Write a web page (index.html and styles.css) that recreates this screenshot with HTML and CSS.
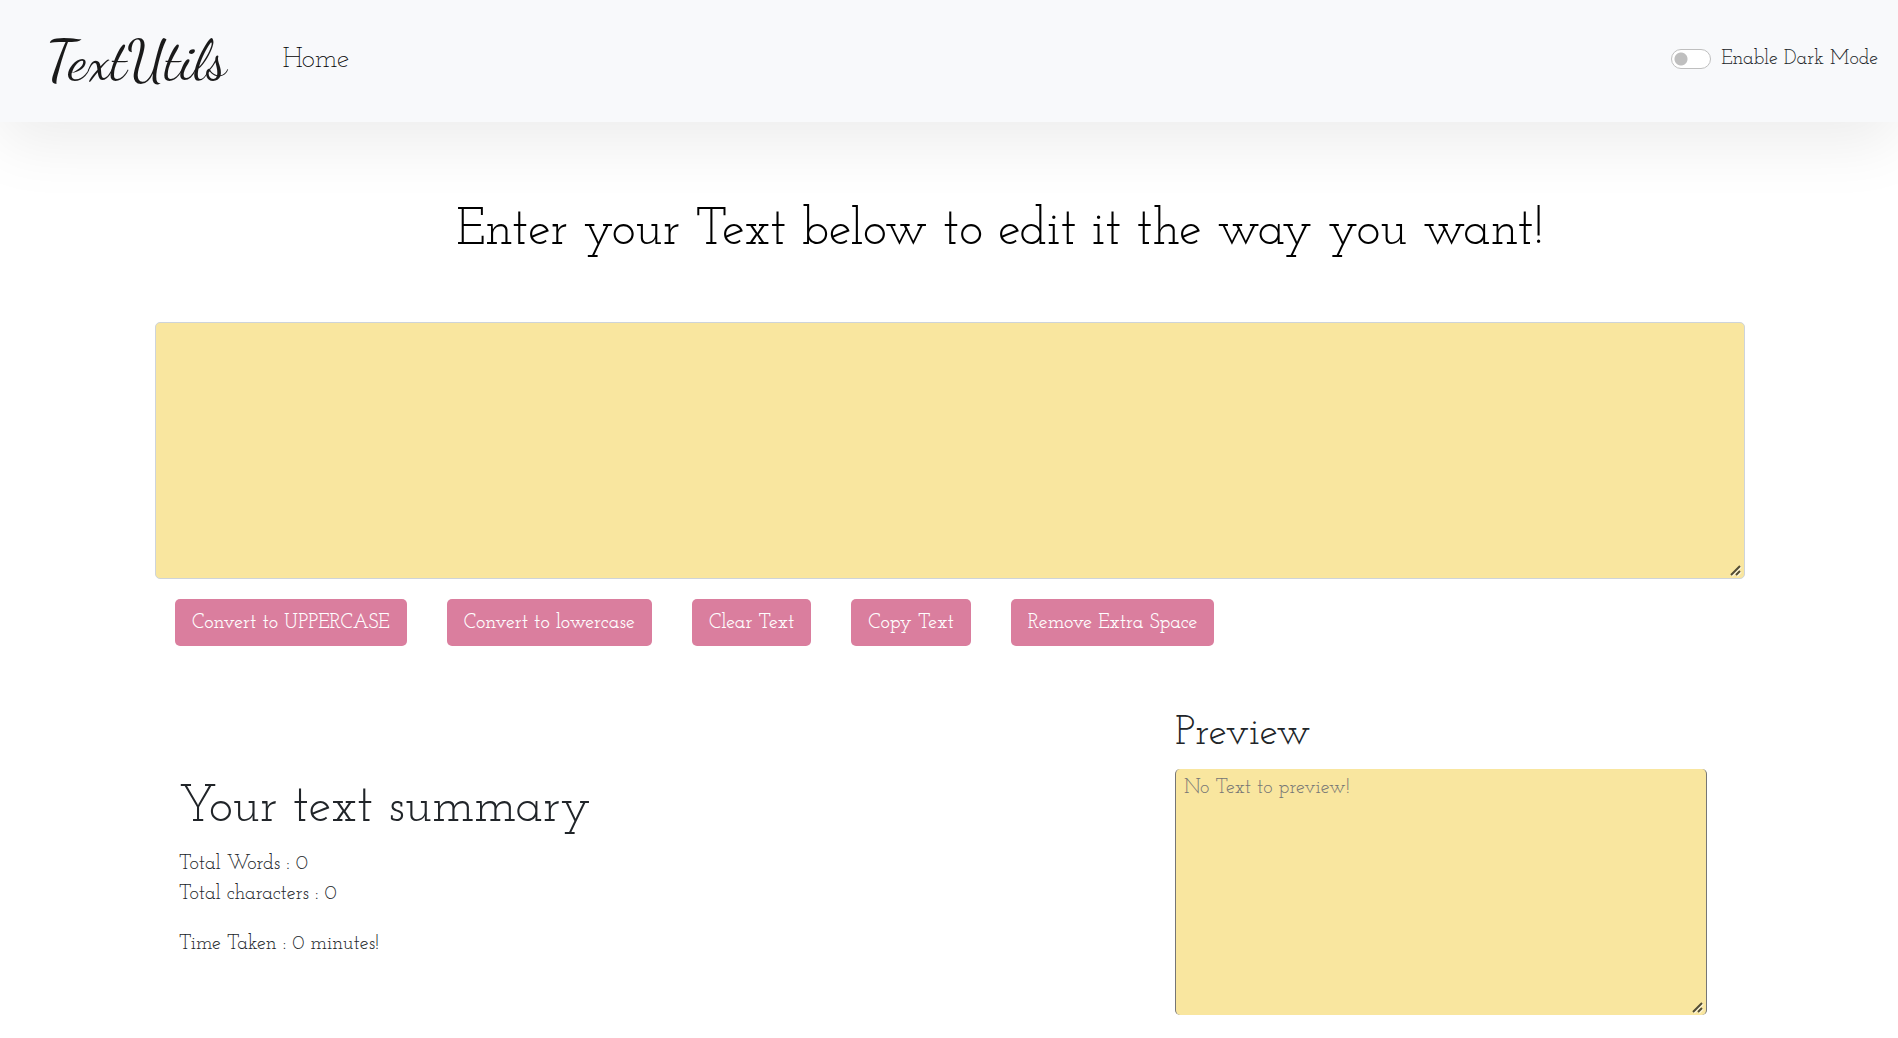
FILE: index.html
```html
<!DOCTYPE html>
<html lang="en">
<head>
  <meta charset="utf-8">
  <meta name="viewport" content="width=device-width, initial-scale=1">
  <title>TextUtils</title>
  <link rel="stylesheet" href="styles.css">
</head>
<body>
  <nav class="navbar">
    <a class="brand" href="#">TextUtils</a>
    <a class="nav-link" href="#">Home</a>
    <div class="mode">
      <input class="switch" type="checkbox" role="switch" id="dark-mode">
      <label for="dark-mode">Enable Dark Mode</label>
    </div>
  </nav>
  <main class="container">
    <h1 class="title"><label for="text">Enter your Text below to edit it the way you want!</label></h1>
    <textarea class="editor" id="text"></textarea>
    <div class="actions">
      <button class="btn" type="button">Convert to UPPERCASE</button>
      <button class="btn" type="button">Convert to lowercase</button>
      <button class="btn" type="button">Clear Text</button>
      <button class="btn" type="button">Copy Text</button>
      <button class="btn" type="button">Remove Extra Space</button>
    </div>
    <div class="results">
      <section class="summary">
        <h2 class="summary-title">Your text summary</h2>
        <p class="stats">Total Words : 0<br>Total characters : 0</p>
        <p class="stats">Time Taken : 0 minutes!</p>
      </section>
      <section class="preview">
        <h2 class="preview-title"><label for="preview">Preview</label></h2>
        <textarea class="preview-box" id="preview" placeholder="No Text to preview!"></textarea>
      </section>
    </div>
  </main>
</body>
</html>
```
FILE: styles.css
```css
* {
  box-sizing: border-box;
}

body {
  margin: 0;
  background: #fff;
  color: #212529;
  font: 400 20px/30px "Josefin Slab", "Liberation Serif", serif;
}

h1, h2, p {
  margin: 0;
}

h1, h2 {
  font-weight: 400;
}

.navbar {
  display: flex;
  align-items: center;
  min-height: 122px;
  padding: 0 20px 4px 46px;
  background: #f8f9fb;
  box-shadow: 0 20px 64px rgba(0, 0, 0, .08);
}

.brand {
  padding-top: 4px;
  color: #1a1a1a;
  font: 400 56px/64px "Dancing Script", "Liberation Serif", serif;
  text-decoration: none;
}

.nav-link {
  margin-left: 56px;
  padding-top: 2px;
  color: #000;
  font-size: 28px;
  font-weight: 300;
  text-decoration: none;
}

.mode {
  display: flex;
  align-items: center;
  gap: 10px;
  margin-left: auto;
}

.switch {
  appearance: none;
  width: 40px;
  height: 20px;
  margin: 0;
  border: 1px solid #bfbfbf;
  border-radius: 10px;
  background: #fff radial-gradient(circle at 9px 9px, #bfbfbf 6px, transparent 7px);
}

.container {
  padding: 74px 153px 20px 155px;
}

.title {
  margin-bottom: 54px;
  padding-left: 100px;
  color: #000;
  font-size: 51px;
  line-height: 72px;
  text-align: center;
}

.editor {
  display: block;
  width: 100%;
  height: 257px;
  padding: 6px 12px;
  border: 1px solid #ced4da;
  border-radius: 5px;
  background: #f9e69f;
  font: inherit;
}

textarea::-webkit-resizer {
  background: url("data:image/svg+xml,%3Csvg xmlns='http://www.w3.org/2000/svg' width='12' height='12' fill='none' stroke-width='2'%3E%3Cpath stroke='%23fff' stroke-opacity='.6' d='M2 11l9-9M7 11l4-4'/%3E%3Cpath stroke='%23534d35' d='M1 10l9-9M6 10l4-4'/%3E%3C/svg%3E") no-repeat right 2px bottom 1px;
}

.actions {
  display: flex;
  flex-wrap: wrap;
  gap: 40px;
  padding: 20px;
}

.btn {
  height: 47px;
  padding: 0 17px;
  border: 0;
  border-radius: 5px;
  background: #da7e9e;
  color: #fff;
  font: 500 20px/30px "Josefin Slab", "Liberation Serif", serif;
}

.results {
  display: flex;
  justify-content: space-between;
  padding: 44px 38px 0 24px;
}

.summary {
  padding-top: 67px;
}

.summary-title {
  margin-bottom: 8px;
  font-size: 51px;
  line-height: 64px;
}

.stats {
  margin-bottom: 20px;
}

.preview {
  flex: 0 0 532px;
}

.preview-title {
  margin-bottom: 11px;
  font-size: 41px;
  line-height: 48px;
}

.preview-box {
  display: block;
  width: 100%;
  height: 246px;
  padding: 4px 8px;
  border: 1px solid #767676;
  border-width: 0 1px;
  border-radius: 5px;
  background: #f9e69f;
  font: inherit;
}

.preview-box::placeholder {
  color: #757575;
}
```
